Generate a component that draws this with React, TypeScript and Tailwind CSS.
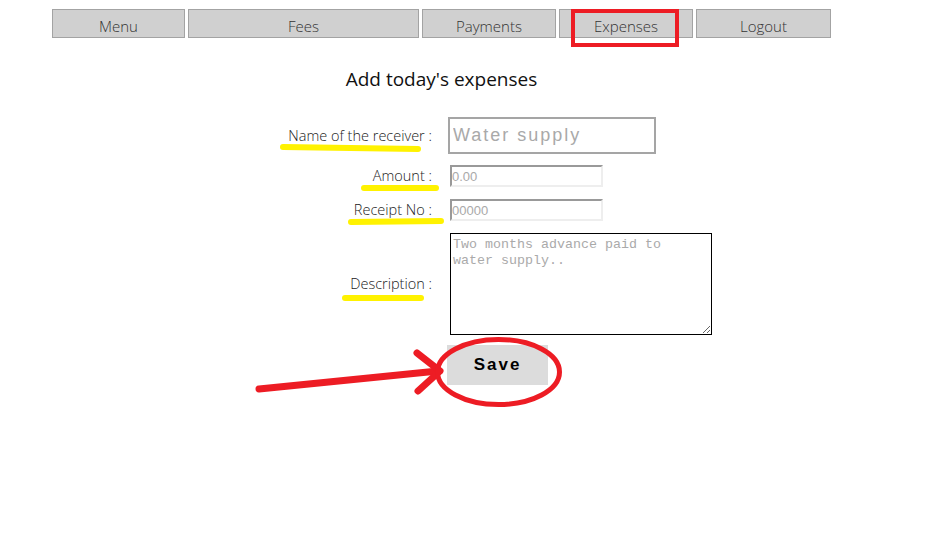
export default function App() {
  const tabs = [
    { label: "Menu", w: "w-[133px]" },
    { label: "Fees", w: "w-[231px]" },
    { label: "Payments", w: "w-[134px]" },
    { label: "Expenses", w: "w-[134px]" },
    { label: "Logout", w: "w-[135px]" },
  ]

  return (
    <div className="relative w-[929px] h-[535px] bg-white font-['Open_Sans',sans-serif] text-[#222]">
      <div className="ml-[52px] w-[779px] pt-[9px]">
        {/* Nav */}
        <div className="flex gap-[3px]">
          {tabs.map((t) => (
            <div
              key={t.label}
              className={`${t.w} h-[29px] flex items-center justify-center pt-[5px] border border-[#a3a3a3] bg-[#d0d0d0] text-[15px] leading-[20px] font-light text-[#333]`}
            >
              {t.label}
            </div>
          ))}
        </div>

        {/* Title */}
        <h1 className="mt-[28px] h-[26px] text-center text-[19px] leading-[26px] text-[#111]">
          Add today's expenses
        </h1>

        {/* Form */}
        <div className="mt-[25px] flex flex-col text-[14.5px] font-light text-[#222]">
          <div className="flex items-center">
            <label className="w-[380px] text-right">Name of the receiver :</label>
            <input
              className="ml-[16px] w-[208px] h-[37px] border-2 border-[#a5a5a5] px-[3px] font-['Liberation_Sans',sans-serif] text-[18px] tracking-[2px] placeholder:text-[#a9a9a9] outline-none"
              placeholder="Water supply"
            />
          </div>

          <div className="mt-[11px] flex items-center">
            <label className="w-[380px] text-right">Amount :</label>
            <input
              className="ml-[18px] w-[153px] h-[22px] border-2 border-t-[#999] border-l-[#999] border-b-[#eee] border-r-[#eee] px-0 font-['Liberation_Sans',sans-serif] text-[13px] placeholder:text-[#a9a9a9] outline-none"
              placeholder="0.00"
            />
          </div>

          <div className="mt-[12px] flex items-center">
            <label className="w-[380px] text-right">Receipt No :</label>
            <input
              className="ml-[18px] w-[153px] h-[22px] border-2 border-t-[#999] border-l-[#999] border-b-[#eee] border-r-[#eee] px-0 font-['Liberation_Sans',sans-serif] text-[13px] placeholder:text-[#a9a9a9] outline-none"
              placeholder="00000"
            />
          </div>

          <div className="mt-[12px] flex items-center">
            <label className="w-[380px] text-right">Description :</label>
            <textarea
              className="ml-[18px] w-[262px] h-[102px] border border-black pl-[2px] pr-[20px] pt-[3px] font-['Liberation_Mono',monospace] text-[13.33px] leading-[16px] placeholder:text-[#aaaaaa] outline-none"
              placeholder="Two months advance paid to water supply.."
            />
          </div>

          <div className="mt-[10px] flex">
            <div className="w-[380px]" />
            <button className="ml-[15px] w-[101px] h-[40px] bg-[#dcdcdc] font-['Liberation_Sans',sans-serif] text-[17px] font-bold tracking-[2px] text-black">
              Save
            </button>
          </div>
        </div>
      </div>

      {/* Annotations drawn over the page */}
      <svg
        className="absolute inset-0 pointer-events-none"
        width="929"
        height="535"
        viewBox="0 0 929 535"
        fill="none"
      >
        <rect x="573" y="11" width="104" height="34" stroke="#ed1c24" strokeWidth="4" />
        <g stroke="#fff200" strokeWidth="6" strokeLinecap="round">
          <path d="M283 147 L418 149" />
          <path d="M364 188 L436 188" />
          <path d="M351 222 L441 221" />
          <path d="M345 298 L421 298" />
        </g>
        <g stroke="#ed1c24" strokeLinecap="round" strokeLinejoin="round">
          <path d="M259 389 L438 371" strokeWidth="7" />
          <path d="M417 353 L440 371 L418 391" strokeWidth="7" />
          <ellipse cx="498.5" cy="372" rx="61" ry="32.5" strokeWidth="5" />
        </g>
      </svg>
    </div>
  )
}
